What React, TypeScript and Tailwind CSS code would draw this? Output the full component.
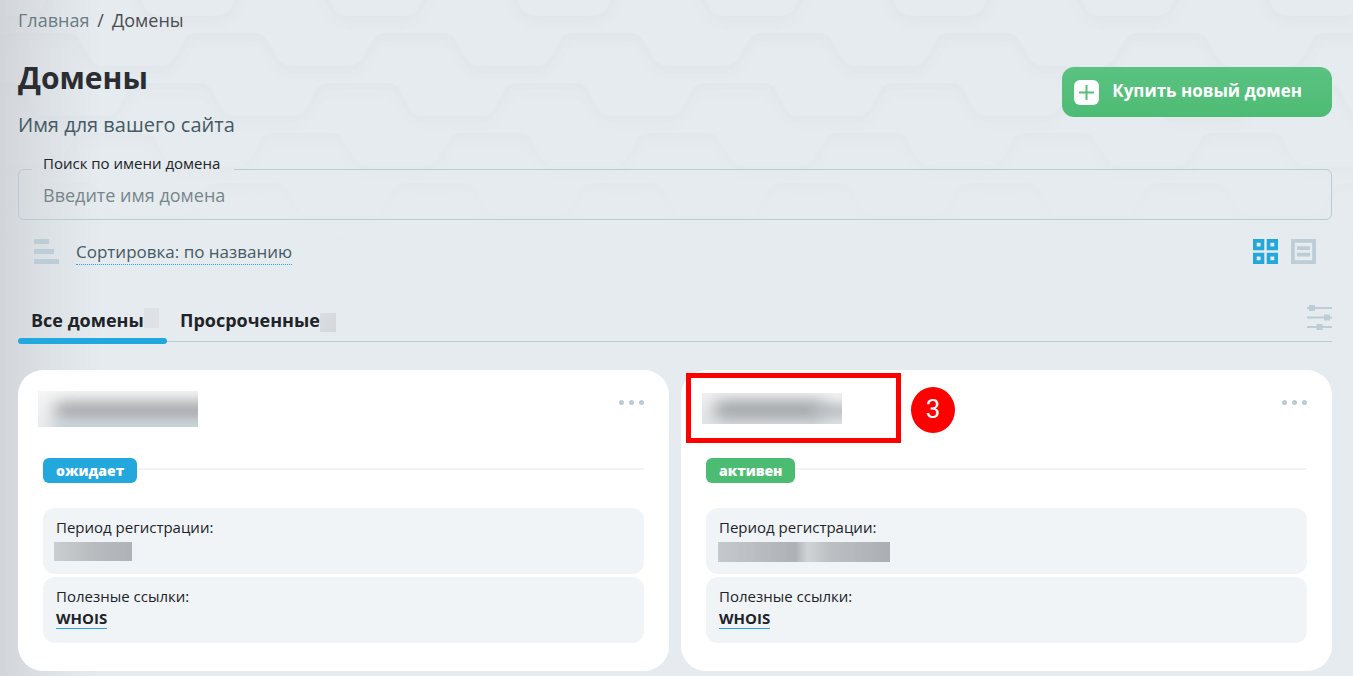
import React from "react";

const ROWS = [5, 4, 3, 2, 1, 0];

function wave(row: number) {
  const y = -17 + row * 50;
  const start = 615 - row * 56 - 188 * 4;
  let d = `M${start} -80 V${y}`;
  for (let i = 0; i < 24; i++) {
    const x = start + i * 188;
    d += ` H${x + 72} Q${x + 81} ${y} ${x + 85} ${y + 8} L${x + 94} ${y + 24} Q${x + 99} ${y + 33} ${x + 108} ${y + 33} H${x + 166} Q${x + 175} ${y + 33} ${x + 180} ${y + 24} L${x + 189} ${y + 8} Q${x + 193} ${y} ${x + 202} ${y}`;
  }
  return d + " V-80 Z";
}

function Backdrop() {
  return (
    <div aria-hidden="true" className="pointer-events-none absolute inset-0 -z-10 overflow-hidden">
      <svg className="block h-[320px] w-full">
        <defs>
          <filter id="soft" x="-5%" y="-20%" width="110%" height="160%">
            <feDropShadow dx="0" dy="5" stdDeviation="6" floodColor="#7d8590" floodOpacity="0.055" />
          </filter>
          <linearGradient id="fade" x1="0" y1="0" x2="0" y2="1">
            <stop offset="0.25" stopColor="#e5ebee" stopOpacity="0" />
            <stop offset="0.85" stopColor="#e5ebee" />
          </linearGradient>
        </defs>
        {ROWS.map((row) => (
          <path key={row} d={wave(row)} fill="#e5ebee" filter="url(#soft)" />
        ))}
        <rect width="100%" height="320" fill="url(#fade)" />
      </svg>
      <div className="absolute inset-y-0 left-0 w-[100px] bg-linear-to-r from-[#cbced4]/75 via-[#cfd2d8]/50 via-35% to-transparent" />
    </div>
  );
}

function Dots() {
  return (
    <svg width="25" height="5" viewBox="0 0 25 5" fill="#b9cbd5">
      <circle cx="2.5" cy="2.5" r="2.5" />
      <circle cx="12.5" cy="2.5" r="2.5" />
      <circle cx="22.5" cy="2.5" r="2.5" />
    </svg>
  );
}

function DomainCard({ status, badge, title, period }: { status: string; badge: string; title: React.ReactNode; period: React.ReactNode }) {
  return (
    <article className="relative rounded-[25px] bg-white px-[25px] pt-5 pb-7">
      <div className="flex h-[68px] items-start justify-between">
        {title}
        <button type="button" aria-label="Меню" className="mt-[10px] flex h-[5px] items-center">
          <Dots />
        </button>
      </div>
      <div className="flex h-[25px] items-center">
        <span className={`rounded-md px-[13px] text-[14px] leading-[25px] font-extrabold text-white ${badge}`}>{status}</span>
        <span className="-mt-1 h-[2px] flex-1 bg-[#f0f4f7]" />
      </div>
      <div className="mt-[25px] h-[66px] rounded-xl bg-[#f0f4f7] px-[13px] pt-2 text-[15px] leading-[23px]">
        <div>Период регистрации:</div>
        {period}
      </div>
      <div className="mt-[3px] h-[66px] rounded-xl bg-[#f0f4f7] px-[13px] pt-2 text-[15px] leading-[23px]">
        <div>Полезные ссылки:</div>
        <a href="#whois" className="block w-fit border-b border-[#22a8dc] leading-5 font-bold">WHOIS</a>
      </div>
    </article>
  );
}

export default function App() {
  return (
    <div className="relative isolate min-h-screen overflow-hidden bg-[#e5ebee] pr-[21px] pb-[5px] pl-[18px] font-['Open_Sans','Noto_Sans',sans-serif] text-[#212329]">
      <Backdrop />
      <nav className="flex h-10 items-center gap-2 text-[18px]">
        <a href="#home" className="text-[#6b7b82]">Главная</a>
        <span className="text-[#4a4c52]">/</span>
        <span className="text-[#4a4c52]">Домены</span>
      </nav>

      <header className="flex items-start justify-between">
        <div>
          <h1 className="pt-[17px] text-[30px] leading-[42px] font-bold text-[#2b2d33]">Домены</h1>
          <p className="mt-3 text-[20px] leading-7 text-[#455a64]">Имя для вашего сайта</p>
        </div>
        <button type="button" className="mt-[27px] flex h-[50px] items-center gap-[13px] rounded-xl bg-linear-to-b from-[#5bc282] to-[#4dbc73] pr-[30px] pl-3 text-[17px] font-bold text-white">
          <svg width="25" height="25" viewBox="0 0 25 25">
            <rect width="25" height="25" rx="6" fill="#fff" />
            <path d="M12.5 5v15M5 12.5h15" stroke="#54bf7b" strokeWidth="2" />
          </svg>
          <span className="pb-[2px]">Купить новый домен</span>
        </button>
      </header>

      <fieldset className="mt-[14px] rounded-md border border-[#b9cbd5] px-[13px]">
        <legend className="pr-[14px] pb-3 pl-[11px] text-[15px] leading-5">
          <label htmlFor="domain">Поиск по имени домена</label>
        </legend>
        <input id="domain" type="text" placeholder="Введите имя домена" className="block h-[34px] w-full bg-transparent px-[11px] pb-[15px] text-[18px] outline-none placeholder:text-[#78868b]" />
      </fieldset>

      <div className="mt-[18px] flex h-[26px] items-center justify-between px-4">
        <button type="button" className="flex items-center gap-[17px] text-[17px] text-[#455a64]">
          <svg width="25" height="25" viewBox="0 0 25 25" fill="#bccdd6">
            <path d="M0 0h15v5H0zM0 10h20v5H0zM0 20h25v5H0z" />
          </svg>
          <span className="mt-[2px] border-b border-dotted border-[#22a8dc] leading-[25px]">Сортировка: по названию</span>
        </button>
        <div className="flex gap-[13px]">
          <button type="button" aria-label="Плитка">
            <svg width="25" height="25" viewBox="0 0 25 25" fill="#22a8dc" fillRule="evenodd">
              <path d="M0 0h11.3v11.3H0zM3.7 3.7v3.9h3.9V3.7zM13.7 0H25v11.3H13.7zM17.4 3.7v3.9h3.9V3.7zM0 13.7h11.3V25H0zM3.7 17.4v3.9h3.9v-3.9zM13.7 13.7H25V25H13.7zM17.4 17.4v3.9h3.9v-3.9z" />
            </svg>
          </button>
          <button type="button" aria-label="Список">
            <svg width="25" height="25" viewBox="0 0 25 25" fill="#bccdd6" fillRule="evenodd">
              <path d="M0 0h25v25H0zM3.8 3.8v17.4h17.4V3.8zM6 7.3h13v3.8H6zM6 13.8h13v3.8H6z" />
            </svg>
          </button>
        </div>
      </div>

      <div className="mt-9 flex h-[42px] justify-between border-b border-[#b9cbd5] text-[18px] font-bold">
        <div role="tablist" className="flex">
          <button type="button" role="tab" aria-selected="true" className="relative flex h-10 w-[149px] items-center pl-[13px]">
            <span>Все домены</span>
            <span className="-mt-1 h-5 w-[15px] bg-[#dee2e6]" />
            <span className="absolute inset-x-0 top-[38px] h-[6px] rounded-full bg-[#22a8dc]" />
          </button>
          <button type="button" role="tab" aria-selected="false" className="flex h-10 items-center pl-[13px]">
            <span>Просроченные</span>
            <span className="mt-1 h-[19px] w-4 bg-linear-to-br from-[#dbdfe3] to-[#d2d6da]" />
          </button>
        </div>
        <button type="button" aria-label="Фильтры" className="mt-[5px] h-[25px]">
          <svg width="25" height="25" viewBox="0 0 25 25" fill="#bccdd6">
            <path d="M0 2h25v2H0zM2 0h6v6H2zM0 11.500h25v2H0zM17 9.500h6v6h-6zM0 21h25v2H0zM9.500 19h6v6h-6z" />
          </svg>
        </button>
      </div>

      <main className="mt-7 grid grid-cols-2 gap-3">
        <DomainCard
          status="ожидает"
          badge="bg-[#22a8dc]"
          title={
            <div className="relative mt-px -ml-[5px] h-9 w-40 overflow-hidden bg-linear-to-b from-[#f6f6f6] to-[#e8ebed]">
              <div className="absolute top-3 left-4 h-4 w-44 rounded-full bg-[#97999d] blur-[8px]" />
              <div className="absolute top-8 left-4 h-3 w-44 bg-[#bccad0] blur-[6px]" />
            </div>
          }
          period={<div className="-ml-[2px] mt-[3px] h-[19px] w-[78px] bg-linear-to-r from-[#cbced1] via-[#b8bcbf] to-[#afb3b7]" />}
        />
        <DomainCard
          status="активен"
          badge="bg-[#4dbc73]"
          title={
            <>
              <div className="relative mt-[3px] -ml-1 h-[31px] w-[140px] overflow-hidden bg-linear-to-b from-[#f1f1f2] to-[#e0e4e6]">
                <div className="absolute top-[9px] left-3 h-4 w-[110px] rounded-full bg-[#94979b] blur-[8px]" />
                <div className="absolute top-3 left-28 h-3 w-10 bg-[#b4b8bc] blur-[6px]" />
              </div>
              <div className="absolute top-[3px] left-[5px] h-[70px] w-[215px] border-[5px] border-[#ff0000]" />
              <div className="absolute top-[17px] left-[230px] h-[46px] w-11 rounded-[50%] bg-[#ff0000] text-center font-[Roboto,sans-serif] text-[26px] leading-[44px] text-white">3</div>
            </>
          }
          period={<div className="-ml-px mt-[3px] h-5 w-[172px] bg-[linear-gradient(90deg,#c5c9cc,#bbbec2_20%,#adb0b4_45%,#d0d4d7_52%,#bcc0c3_65%,#abafb3)]" />}
        />
      </main>
    </div>
  );
}
